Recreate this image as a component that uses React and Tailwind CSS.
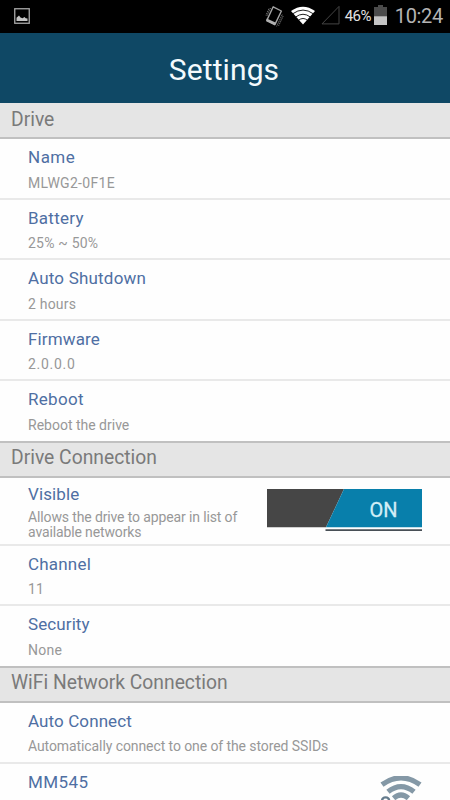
import React from 'react'

const sections = [
  {
    title: 'Drive',
    header: 'h-[36px] pt-[5px]',
    rows: [
      { title: 'Name', text: 'MLWG2-0F1E', size: 'h-[61px] pt-[7px]', track: 'tracking-[0.5px]', subTrack: 'tracking-[0.3px]', gap: 'mt-[5px]' },
      { title: 'Battery', text: '25% ~ 50%', size: 'h-[60px] pt-[7px]', track: 'tracking-[0.25px]', subTrack: 'tracking-[0.2px]', gap: 'mt-[4px]' },
      { title: 'Auto Shutdown', text: '2 hours', size: 'h-[61px] pt-[7px]', track: 'tracking-[0.2px]', subTrack: 'tracking-[0.2px]', gap: 'mt-[5px]' },
      { title: 'Firmware', text: '2.0.0.0', size: 'h-[60px] pt-[7px]', track: 'tracking-[0.15px]', subTrack: 'tracking-[0.7px]', gap: 'mt-[4px]' },
      { title: 'Reboot', text: 'Reboot the drive', size: 'h-[60px] pt-[7px]', track: 'tracking-[0.3px]', subTrack: 'tracking-[0px]', gap: 'mt-[5px]', last: true }
    ]
  },
  {
    title: 'Drive Connection',
    header: 'h-[37px] pt-[3px] border-t-2',
    rows: [
      { title: 'Visible', text: 'Allows the drive to appear in list of available networks', size: 'h-[68px] pt-[5px]', track: 'tracking-[0.1px]', subTrack: 'tracking-[-0.13px]', gap: 'mt-[5px]', toggle: true },
      { title: 'Channel', text: '11', size: 'h-[60px] pt-[7px]', track: 'tracking-[0.2px]', subTrack: 'tracking-[0.2px]', gap: 'mt-[4px]' },
      { title: 'Security', text: 'None', size: 'h-[60px] pt-[7px]', track: 'tracking-[0.1px]', subTrack: 'tracking-[0.25px]', gap: 'mt-[5px]', last: true }
    ]
  },
  {
    title: 'WiFi Network Connection',
    header: 'h-[37px] pt-[3px] border-t-2',
    rows: [
      { title: 'Auto Connect', text: 'Automatically connect to one of the stored SSIDs', size: 'h-[61px] pt-[7px]', track: 'tracking-[0.1px]', subTrack: 'tracking-[-0.09px]', gap: 'mt-[4px]' },
      { title: 'MM545', size: 'h-[60px] pt-[7px]', track: 'tracking-[0.4px]', wifi: true, last: true }
    ]
  }
]

function StatusBar() {
  return (
    <div className="flex h-[33px] shrink-0 items-center bg-black pl-[14px] pr-[7px] text-[#b4b4b4]">
      <svg className="mt-[-1px] h-4 w-4" viewBox="0 0 16 16" fill="none">
        <rect x="0.75" y="0.75" width="14.5" height="14.5" stroke="#a8a8a8" strokeWidth="1.3" />
        <path d="M2.5 13V9.8L5 7.4l1.5 2 2 .8L10.5 9l1.2 1.2 1.8.3V13z" fill="#c4c4c4" />
      </svg>
      <svg className="ml-auto h-[23px] w-[19px]" viewBox="0 0 19 23" fill="none">
        <path d="M8.2 1.8 16.4 6 10 19.4 1.8 15.4z" stroke="#a4a4a4" strokeWidth="1.4" strokeLinejoin="round" />
        <path d="m1.8 13.4 9.2 4.4-1.2 2.6-8.6-4.2z" fill="#b0b0b0" />
        <path d="M5.6 3 1.6 11.4M4 3.6.8 10.4M17.2 9.6l-5.6 11.8M18.2 11l-4.6 9.8" stroke="#7a7a7a" strokeWidth="0.9" strokeDasharray="1.6 .8" />
      </svg>
      <svg className="ml-[7px] mt-[-3px] h-[19px] w-[24px]" viewBox="0 0 24 20" preserveAspectRatio="none">
        <path d="M0 5.2Q12-3.8 24 5.2L12 19.5z" fill="#fff" />
        <path d="M1.7 8.2Q12 .4 22.3 8.2M4.6 11.6Q12 5.8 19.4 11.6M7.5 15Q12 11.3 16.5 15" stroke="#000" strokeWidth="0.9" fill="none" />
      </svg>
      <svg className="ml-[6px] mt-[-3px] h-[20px] w-[19px]" viewBox="0 0 19 20" fill="none">
        <path d="M18 1.4V18.9H1z" stroke="#454545" strokeWidth="1" />
      </svg>
      <span className="ml-[5px] w-[28px] whitespace-nowrap text-[15px] leading-none tracking-[-0.5px] text-[#e2e2e2]">46%</span>
      <svg className="ml-[1px] mt-[-3px] h-[20px] w-[13px]" viewBox="0 0 13 20">
        <path d="M4 0h5v2h4v18H0V2h4z" fill="#4b4b4b" />
        <path d="M0 11.3h13V20H0z" fill="#c4c4c4" />
      </svg>
      <span className="ml-[8px] mt-[-1px] whitespace-nowrap text-[20px] leading-none tracking-[-0.3px]">10:24</span>
    </div>
  )
}

function Toggle() {
  return (
    <svg className="mt-[6px] h-[43px] w-[155px] shrink-0" viewBox="0 0 155 43">
      <path d="M0 0h77L59 38.3H0z" fill="#464646" />
      <path d="M77 0h78v38.3H59z" fill="#087fab" />
      <path d="M58.5 40.3H155v1.7H58.5z" fill="#484f56" />
      <text x="102.5" y="28.4" fontSize="21" textLength="28" lengthAdjust="spacingAndGlyphs" fill="#d2eef7" stroke="#d2eef7" strokeWidth="0.3">ON</text>
    </svg>
  )
}

function WifiLock() {
  return (
    <svg className="mt-[5px] h-[41px] w-[42px] shrink-0" viewBox="0 0 42 41" fill="none">
      <path d="M2 8.6Q21-5 40 8.6" stroke="#8498a6" strokeWidth="5.2" />
      <path d="M8 15.8Q21 5.4 34 15.8" stroke="#8498a6" strokeWidth="5.2" />
      <path d="M13.6 22.2Q21 15.9 28.4 22.2" stroke="#8498a6" strokeWidth="5.2" />
      <path d="M2 29v-4a3.6 3.6 0 0 1 7.2 0v4" stroke="#647b8c" strokeWidth="2.4" />
      <rect x="0" y="28" width="11" height="9" fill="#647b8c" />
    </svg>
  )
}

function Row({ row }) {
  return (
    <div className={`flex shrink-0 justify-between px-[28px] ${row.size} ${row.last ? '' : 'border-b-2 border-[#e9e9e9]'}`}>
      <div className={row.toggle ? 'w-[225px]' : ''}>
        <div className={`text-[17px] leading-[22px] text-[#4f6fa3] ${row.track}`}>{row.title}</div>
        {row.text && (
          <div className={`text-[14px] text-[#989898] ${row.subTrack} ${row.gap} ${row.toggle ? 'leading-[15px]' : 'leading-[20px]'}`}>
            {row.text}
          </div>
        )}
      </div>
      {row.toggle && <Toggle />}
      {row.wifi && <WifiLock />}
    </div>
  )
}

export default function App() {
  return (
    <div className="flex h-[800px] w-[450px] flex-col overflow-hidden bg-[#fefefe] font-['Roboto',sans-serif]">
      <StatusBar />
      <div className="flex h-[70px] shrink-0 items-center justify-center bg-[#0f4865]">
        <h1 className="pt-[4px] pr-[2px] text-[30px] leading-none tracking-[0.1px] text-[#f4fafd]">Settings</h1>
      </div>
      {sections.map((section) => (
        <React.Fragment key={section.title}>
          <div className={`shrink-0 border-b-2 border-[#c0c0c0] bg-[#e5e5e5] pl-[11px] text-[19.3px] leading-[24px] text-[#7a7a7a] ${section.header}`}>
            {section.title}
          </div>
          {section.rows.map((row) => (
            <Row key={row.title} row={row} />
          ))}
        </React.Fragment>
      ))}
    </div>
  )
}
